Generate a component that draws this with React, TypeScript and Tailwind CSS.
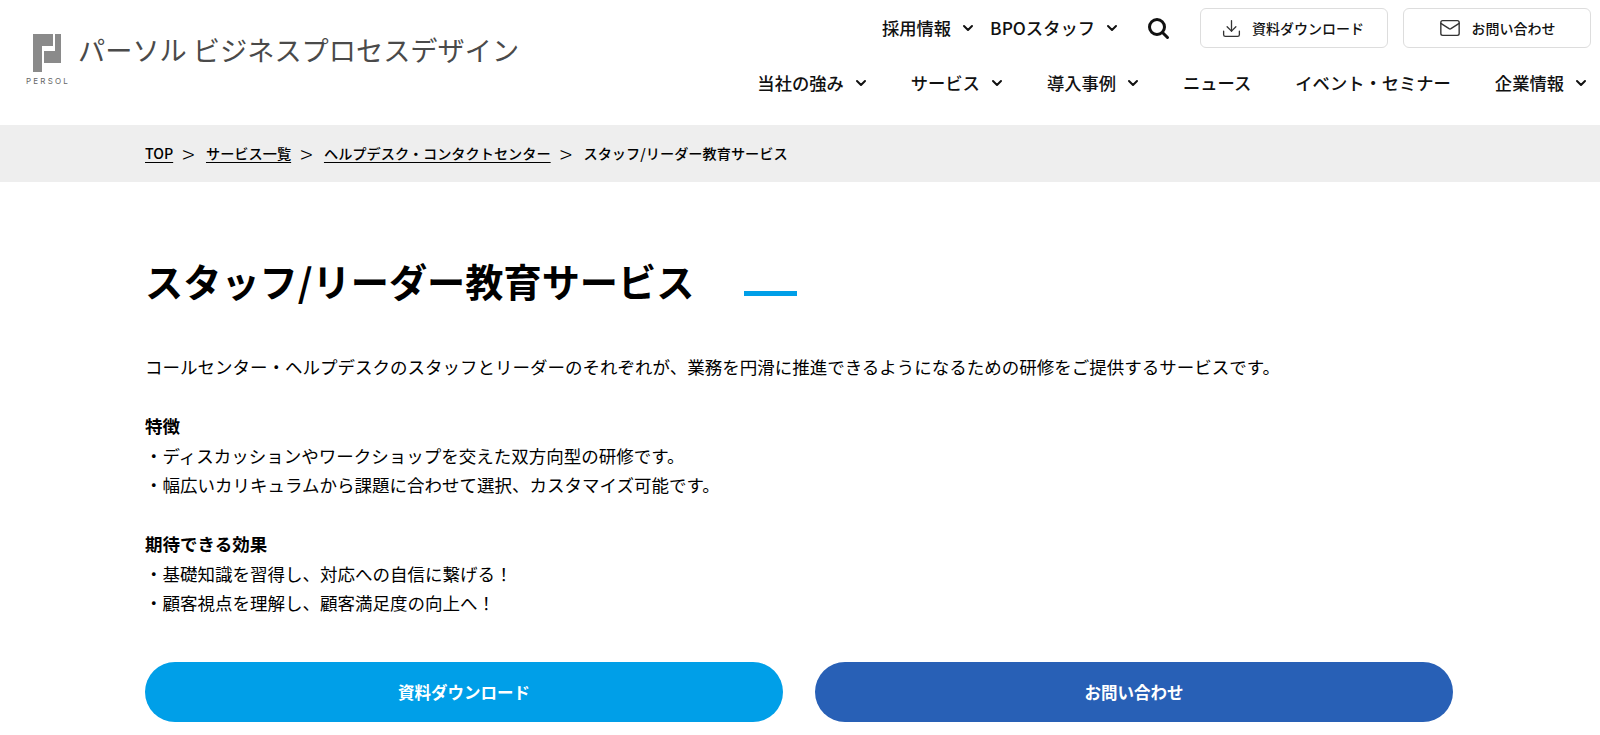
import { ChevronDown, Download, Mail } from "lucide-react";

const Chev = () => (
  <ChevronDown className="w-[16px] h-[16px] ml-[9px] -mr-[2px] shrink-0" strokeWidth={3} color="#111" />
);

const Nav = ({ label, chev = true, className = "" }: { label: string; chev?: boolean; className?: string }) => (
  <a className={`flex items-center text-[17.3px] font-medium text-[#111] whitespace-nowrap ${className}`}>
    {label}
    {chev && <Chev />}
  </a>
);

const Crumb = ({ label }: { label: string }) => (
  <>
    <a className="underline underline-offset-[3px] font-medium">{label}</a>
    <span className="text-[23px] leading-[23px] font-light ml-[9px] mr-[11.5px]">&gt;</span>
  </>
);

export default function App() {
  return (
    <div className="w-[1600px] h-[735px] overflow-hidden bg-white text-black font-['Noto_Sans_CJK_JP','Noto_Sans',sans-serif]">
      <header className="h-[125px] flex justify-between pl-[27px] pr-[9px]">
        <div className="flex pt-[34px] items-start">
          <div className="flex flex-col items-center w-[42px] mr-[9px]">
            <svg width="28" height="38" viewBox="0 0 28 38" className="block -ml-[2px]">
              <path d="M0 0H20V12H9V38H0Z" fill="#8a8a8a" />
              <path d="M22 0H28V29H11V17H22Z" fill="#8a8a8a" />
            </svg>
            <span className="text-[8px] leading-[10px] tracking-[2.2px] text-[#666] mt-[4px] font-['Inter',sans-serif] whitespace-nowrap">PERSOL</span>
          </div>
          <span className="text-[27.2px] leading-[36px] font-normal text-[#4a4a4a] whitespace-nowrap -mt-[3px]">パーソル ビジネスプロセスデザイン</span>
        </div>
        <div className="flex flex-col items-end">
          <div className="flex items-center h-[40px] mt-[8px]">
            <Nav label="採用情報" className="mr-[16px]" />
            <Nav label="BPOスタッフ" className="mr-[28px]" />
            <svg width="24" height="24" viewBox="0 0 24 24" className="mr-[30px]" fill="none" stroke="#111" strokeWidth="3">
              <circle cx="11" cy="11" r="7.500" />
              <path d="M16.500 16.500L21.500 21.500" strokeLinecap="round" />
            </svg>
            <a className="w-[188px] h-[40px] mr-[15px] pr-[3px] flex items-center justify-center border border-[#ddd] rounded-[6px] text-[14px] font-medium text-[#111]">
              <Download className="w-[21px] h-[21px] mr-[10px]" strokeWidth={1.5} color="#333" />
              資料ダウンロード
            </a>
            <a className="w-[188px] h-[40px] flex items-center justify-center border border-[#ddd] rounded-[6px] text-[14px] font-medium text-[#111]">
              <Mail className="w-[22px] h-[22px] mr-[11px]" strokeWidth={1.5} color="#333" />
              お問い合わせ
            </a>
          </div>
          <nav className="flex items-center gap-[44px] h-[40px] mt-[15px] pr-[4px]">
            <Nav label="当社の強み" />
            <Nav label="サービス" />
            <Nav label="導入事例" />
            <Nav label="ニュース" chev={false} />
            <Nav label="イベント・セミナー" chev={false} />
            <Nav label="企業情報" />
          </nav>
        </div>
      </header>
      <div className="h-[57px] bg-[#eeeeee] pl-[145px] flex items-center text-[14.2px] text-black">
        <Crumb label="TOP" />
        <Crumb label="サービス一覧" />
        <Crumb label="ヘルプデスク・コンタクトセンター" />
        <span className="font-medium">スタッフ/リーダー教育サービス</span>
      </div>
      <main className="pl-[145px] w-[1453px]">
        <div className="flex items-center pt-[72px]">
          <h1 className="text-[38.2px] leading-[54px] font-bold">スタッフ/リーダー教育サービス</h1>
          <span className="w-[53px] h-[5px] bg-[#009fe8] ml-[50px] mt-[25px]" />
        </div>
        <div className="mt-[44px] text-[17.5px] leading-[29.5px] text-black">
          <p>コールセンター・ヘルプデスクのスタッフとリーダーのそれぞれが、業務を円滑に推進できるようになるための研修をご提供するサービスです。</p>
          <p className="mt-[29.5px] font-bold">特徴</p>
          <p>・ディスカッションやワークショップを交えた双方向型の研修です。</p>
          <p>・幅広いカリキュラムから課題に合わせて選択、カスタマイズ可能です。</p>
          <p className="mt-[29.5px] font-bold">期待できる効果</p>
          <p>・基礎知識を習得し、対応への自信に繋げる！</p>
          <p>・顧客視点を理解し、顧客満足度の向上へ！</p>
        </div>
        <div className="mt-[44px] grid grid-cols-2 gap-[32px]">
          <a className="h-[60px] pt-px rounded-full bg-[#009fe8] text-white font-bold text-[16.5px] flex items-center justify-center">資料ダウンロード</a>
          <a className="h-[60px] pt-px rounded-full bg-[#2860b6] text-white font-bold text-[16.5px] flex items-center justify-center">お問い合わせ</a>
        </div>
      </main>
    </div>
  );
}
